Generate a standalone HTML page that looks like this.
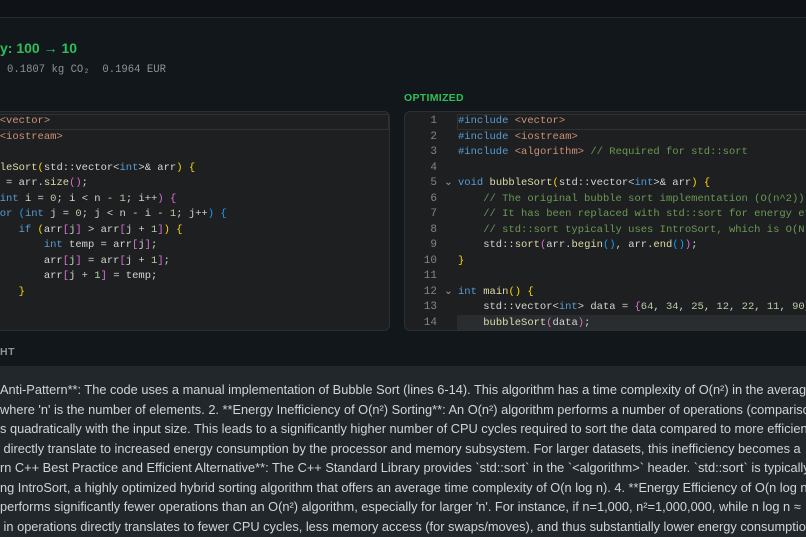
<!DOCTYPE html>
<html><head><meta charset="utf-8"><style>
*{margin:0;padding:0;box-sizing:border-box}
body{width:806px;height:537px;overflow:hidden;background:#12171b;font-family:"Liberation Sans",sans-serif;position:relative}
.top{position:absolute;left:0;top:0;width:806px;height:18px;background:#0f1317;border-bottom:1px solid #262c32}
.title{position:absolute;left:0;top:40px;color:#2fbf5a;font-weight:bold;font-size:14px}
.stats{position:absolute;left:7px;top:64px;color:#8a939c;font-family:"Liberation Mono",monospace;font-size:10.6px;white-space:pre}
.lbl{position:absolute;left:404px;top:92px;color:#2fbf5a;font-weight:bold;font-size:10.5px;letter-spacing:.3px}
.box{position:absolute;top:111px;height:220px;background:#1e1f20;border:1px solid #2c3034;border-radius:6px;overflow:hidden}
.code{position:absolute;top:2px;font-family:"Liberation Mono",monospace;font-size:10.5px;line-height:15.5px;color:#d4d4d4;white-space:pre}
.ln{position:absolute;left:0;top:2px;width:32px;text-align:right;font-family:"Liberation Mono",monospace;font-size:11px;line-height:15.5px;color:#858585;white-space:pre}
.k{color:#569cd6}.s{color:#ce9178}.c{color:#6a9955}.y{color:#ffd700}.p{color:#da70d6}.b{color:#179fff}.n{color:#b5cea8}.f{color:#dcdcaa}
.hl{position:absolute;left:0;right:0;height:16px;border:1px solid #2e3235}
.ins{position:absolute;left:0;top:366px;width:806px;height:171px;background:#22272c}
.itext{position:absolute;left:0;top:380px;width:1200px;color:#d0d4d8;font-size:12.8px;line-height:19.5px;white-space:pre}
.hdr{position:absolute;left:0;top:346px;color:#8a939c;font-size:10.5px;font-weight:bold;letter-spacing:.5px}
</style></head><body>
<div class="top"></div>
<div class="title">y: 100 → 10</div>
<div class="stats">0.1807 kg CO₂  0.1964 EUR</div>
<div class="lbl">OPTIMIZED</div>

<div class="box" style="left:-10px;width:400px">
<div class="hl" style="top:2px"></div>
<div class="code" style="left:-48px"><span class="k">#include</span> <span class="s">&lt;vector&gt;</span>
<span class="k">#include</span> <span class="s">&lt;iostream&gt;</span>

<span class="k">void</span> <span class="f">bubbleSort</span><span class="y">(</span>std::vector&lt;<span class="k">int</span>&gt;&amp; arr<span class="y">)</span> <span class="y">{</span>
    <span class="k">int</span> n = arr.<span class="f">size</span><span class="p">()</span>;
    <span class="k">for</span> <span class="p">(</span><span class="k">int</span> i = <span class="n">0</span>; i &lt; n - <span class="n">1</span>; i++<span class="p">)</span> <span class="p">{</span>
        <span class="k">for</span> <span class="b">(</span><span class="k">int</span> j = <span class="n">0</span>; j &lt; n - i - <span class="n">1</span>; j++<span class="b">)</span> <span class="b">{</span>
            <span class="k">if</span> <span class="y">(</span>arr<span class="p">[</span>j<span class="p">]</span> &gt; arr<span class="p">[</span>j + <span class="n">1</span><span class="p">]</span><span class="y">)</span> <span class="y">{</span>
                <span class="k">int</span> temp = arr<span class="p">[</span>j<span class="p">]</span>;
                arr<span class="p">[</span>j<span class="p">]</span> = arr<span class="p">[</span>j + <span class="n">1</span><span class="p">]</span>;
                arr<span class="p">[</span>j + <span class="n">1</span><span class="p">]</span> = temp;
            <span class="y">}</span></div>
</div>

<div class="box" style="left:404px;width:420px">
<div class="hl" style="top:2px;left:52px"></div>
<div style="position:absolute;left:52px;right:0;top:203px;height:16px;background:#2a2d30"></div>
<div class="ln">1
2
3
4
5
6
7
8
9
10
11
12
13
14</div>
<div class="code" style="left:39px;color:#999">



⌄






⌄</div>
<div class="code" style="left:53px"><span class="k">#include</span> <span class="s">&lt;vector&gt;</span>
<span class="k">#include</span> <span class="s">&lt;iostream&gt;</span>
<span class="k">#include</span> <span class="s">&lt;algorithm&gt;</span> <span class="c">// Required for std::sort</span>

<span class="k">void</span> <span class="f">bubbleSort</span><span class="y">(</span>std::vector&lt;<span class="k">int</span>&gt;&amp; arr<span class="y">)</span> <span class="y">{</span>
    <span class="c">// The original bubble sort implementation (O(n^2)) is</span>
    <span class="c">// It has been replaced with std::sort for energy efficiency</span>
    <span class="c">// std::sort typically uses IntroSort, which is O(N log N)</span>
    std::<span class="f">sort</span><span class="p">(</span>arr.<span class="f">begin</span><span class="b">()</span>, arr.<span class="f">end</span><span class="b">()</span><span class="p">)</span>;
<span class="y">}</span>

<span class="k">int</span> <span class="f">main</span><span class="y">()</span> <span class="y">{</span>
    std::vector&lt;<span class="k">int</span>&gt; data = <span class="p">{</span><span class="n">64</span>, <span class="n">34</span>, <span class="n">25</span>, <span class="n">12</span>, <span class="n">22</span>, <span class="n">11</span>, <span class="n">90</span><span class="p">}</span>;
    <span class="f">bubbleSort</span><span class="p">(</span>data<span class="p">)</span>;</div>
</div>

<div class="hdr">HT</div>
<div class="ins"></div>
<div class="itext">Anti-Pattern**: The code uses a manual implementation of Bubble Sort (lines 6-14). This algorithm has a time complexity of O(n²) in the average
where 'n' is the number of elements. 2. **Energy Inefficiency of O(n²) Sorting**: An O(n²) algorithm performs a number of operations (comparisons
s quadratically with the input size. This leads to a significantly higher number of CPU cycles required to sort the data compared to more efficient
 directly translate to increased energy consumption by the processor and memory subsystem. For larger datasets, this inefficiency becomes a
rn C++ Best Practice and Efficient Alternative**: The C++ Standard Library provides `std::sort` in the `&lt;algorithm&gt;` header. `std::sort` is typically
ng IntroSort, a highly optimized hybrid sorting algorithm that offers an average time complexity of O(n log n). 4. **Energy Efficiency of O(n log n)
performs significantly fewer operations than an O(n²) algorithm, especially for larger 'n'. For instance, if n=1,000, n²=1,000,000, while n log n ≈
 in operations directly translates to fewer CPU cycles, less memory access (for swaps/moves), and thus substantially lower energy consumption</div>
</body></html>
